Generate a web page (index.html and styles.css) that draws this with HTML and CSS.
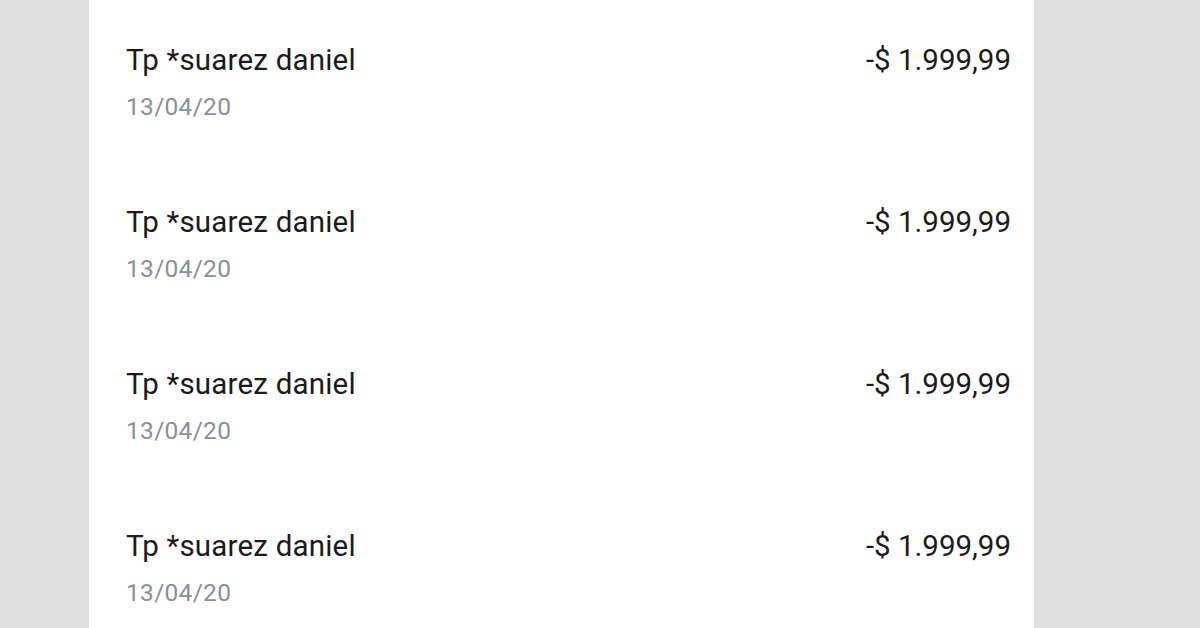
FILE: index.html
```html
<!DOCTYPE html>
<html lang="es">
<head>
<meta charset="utf-8">
<link rel="stylesheet" href="styles.css">
</head>
<body>
<div class="page">
  <main class="panel">
    <div class="row">
      <div class="info">
        <div class="title">Tp *suarez daniel</div>
        <div class="date">13/04/20</div>
      </div>
      <div class="amount">-$ 1.999,99</div>
    </div>
    <div class="row">
      <div class="info">
        <div class="title">Tp *suarez daniel</div>
        <div class="date">13/04/20</div>
      </div>
      <div class="amount">-$ 1.999,99</div>
    </div>
    <div class="row">
      <div class="info">
        <div class="title">Tp *suarez daniel</div>
        <div class="date">13/04/20</div>
      </div>
      <div class="amount">-$ 1.999,99</div>
    </div>
    <div class="row">
      <div class="info">
        <div class="title">Tp *suarez daniel</div>
        <div class="date">13/04/20</div>
      </div>
      <div class="amount">-$ 1.999,99</div>
    </div>
  </main>
</div>
</body>
</html>
```
FILE: styles.css
```css
html, body {
  margin: 0;
  padding: 0;
  height: 100%;
  background: #e0e0e0;
  font-family: Roboto, "Noto Sans", sans-serif;
}
.page {
  display: flex;
  justify-content: flex-start;
  height: 628px;
  overflow: hidden;
  padding-left: 89px;
}
.panel {
  width: 945px;
  background: #ffffff;
  height: 628px;
}
.row {
  display: flex;
  justify-content: space-between;
  align-items: flex-start;
  height: 162px;
  box-sizing: border-box;
  padding: 43px 23px 0 37px;
}
.info {
  display: flex;
  flex-direction: column;
  gap: 16px;
}
.title, .amount {
  font-size: 29.5px;
  line-height: 34px;
  color: #1b1b1b;
}
.title {
  letter-spacing: 0.2px;
}
.date {
  font-size: 24.5px;
  line-height: 28px;
  letter-spacing: 0.3px;
  color: #8a9098;
}
```
